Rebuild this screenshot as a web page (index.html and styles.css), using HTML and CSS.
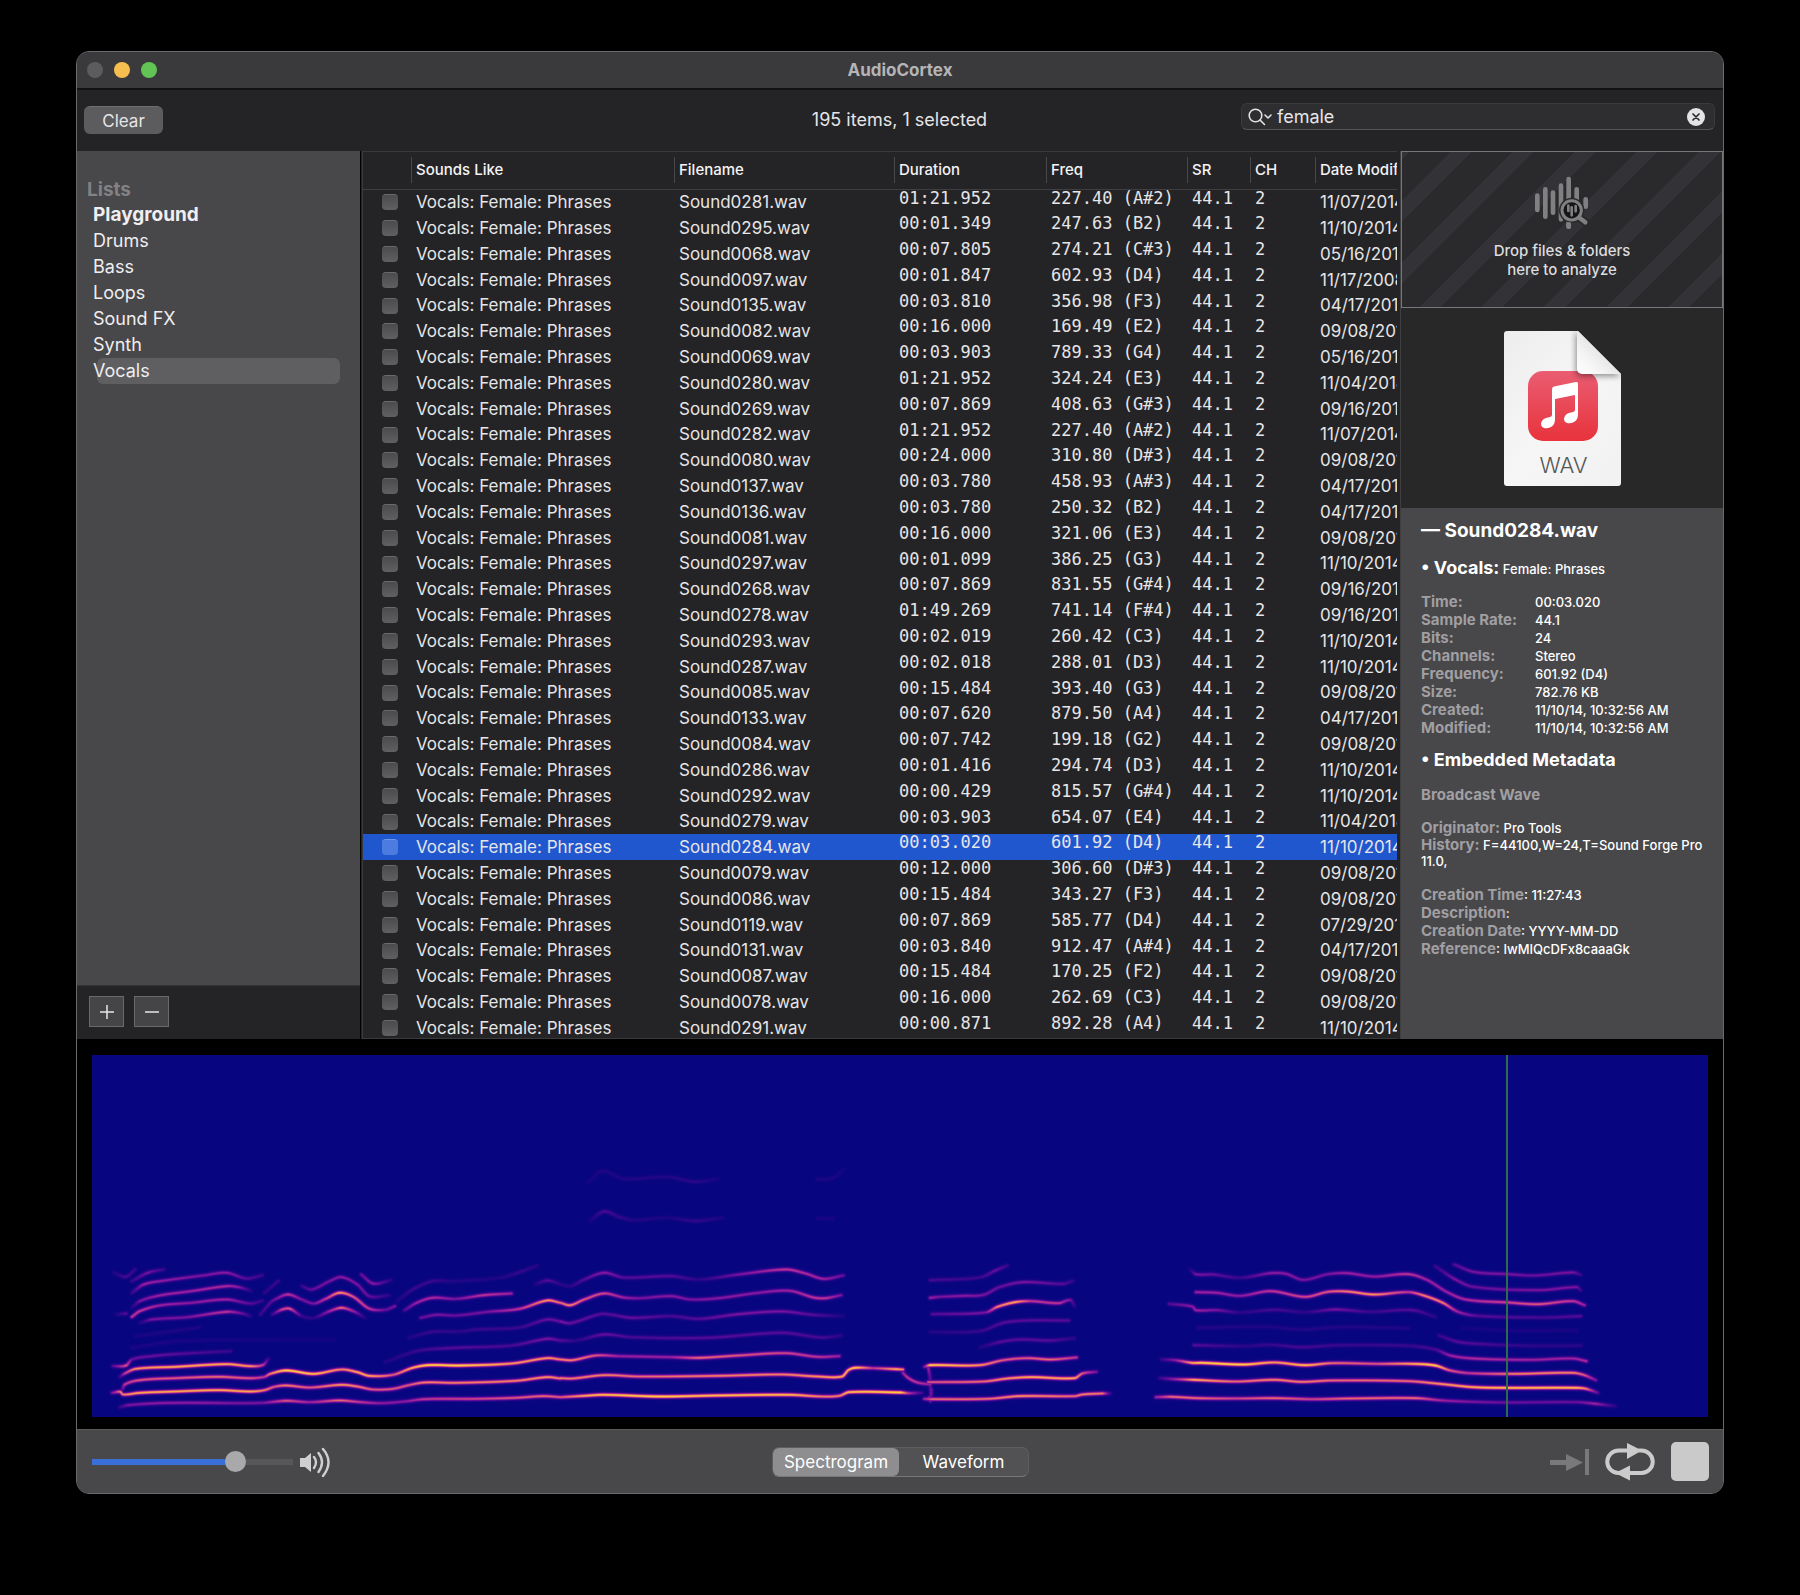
FILE: index.html
```html
<!DOCTYPE html>
<html lang="en">
<head>
<meta charset="utf-8">
<title>AudioCortex</title>
<link rel="stylesheet" href="styles.css">
</head>
<body>
<div class="window">
  <header class="titlebar">
    <div class="lights">
      <button class="light light-close" aria-label="Close"></button>
      <button class="light light-min" aria-label="Minimize"></button>
      <button class="light light-zoom" aria-label="Zoom"></button>
    </div>
    <h1 class="title">AudioCortex</h1>
  </header>

  <div class="toolbar">
    <div><button class="clear">Clear</button></div>
    <p class="status">195 items, 1 selected</p>
    <div class="search">
      <svg class="search-icon" viewBox="0 0 24 18" aria-hidden="true"><g fill="none" stroke="#e2e1e3" stroke-width="1.6" stroke-linecap="round" stroke-linejoin="round"><circle cx="7.500" cy="7.500" r="6.300"/><path d="M12 12l4.500 4.500M17 7l3 3 3-3"/></g></svg>
      <input class="search-input" type="text" value="female" aria-label="Search">
      <button class="search-clear" aria-label="Clear search"><svg viewBox="0 0 18 18"><circle cx="9" cy="9" r="9" fill="#e4e3e5"/><path d="M6 6l6 6M12 6l-6 6" stroke="#2b2a2d" stroke-width="1.700" stroke-linecap="round"/></svg></button>
    </div>
  </div>

  <main class="main">
    <nav class="sidebar">
      <div class="lists">
        <h2 class="lists-title">Lists</h2>
        <ul class="list">
          <li class="item item-bold">Playground</li>
          <li class="item">Drums</li>
          <li class="item">Bass</li>
          <li class="item">Loops</li>
          <li class="item">Sound FX</li>
          <li class="item">Synth</li>
          <li class="item item-active">Vocals</li>
        </ul>
      </div>
      <div class="sidebar-footer">
        <button class="square" aria-label="Add list"><svg viewBox="0 0 16 16"><path d="M8 1v14M1 8h14" stroke="#e6e5e7" stroke-width="1.500"/></svg></button>
        <button class="square" aria-label="Remove list"><svg viewBox="0 0 16 16"><path d="M1 8h14" stroke="#e6e5e7" stroke-width="1.500"/></svg></button>
      </div>
    </nav>

    <section class="files">
      <table class="table">
        <colgroup><col class="c-check"><col class="c-like"><col class="c-name"><col class="c-dur"><col class="c-freq"><col class="c-sr"><col class="c-ch"><col class="c-date"></colgroup>
        <thead><tr>
          <th></th><th>Sounds Like</th><th>Filename</th><th>Duration</th><th>Freq</th><th>SR</th><th>CH</th><th>Date Modified</th>
        </tr></thead>
        <tbody id="rows"></tbody>
      </table>
    </section>

    <aside class="details">
      <div class="drop">
        <svg class="drop-icon" viewBox="940 408 168 162" aria-hidden="true">
          <g stroke="#807f82" stroke-width="14" stroke-linecap="round">
            <path d="M950 467v43M974 448v82M997 458v60M1021 437v101M1044 417v143M1068 448v60M1095 478v22"/>
          </g>
          <circle cx="1053" cy="511" r="38" fill="#2a292c"/>
          <path d="M1070 530l25 17" stroke="#2a292c" stroke-width="24" stroke-linecap="round"/>
          <path d="M1044 553v7" stroke="#807f82" stroke-width="14" stroke-linecap="round"/>
          <circle cx="1053" cy="511" r="29" fill="#151417" stroke="#807f82" stroke-width="9"/>
          <path d="M1043 497v16M1053 502v24M1065 498v16" stroke="#807f82" stroke-width="8" stroke-linecap="round"/>
          <path d="M1076 533l18 14" stroke="#807f82" stroke-width="13" stroke-linecap="round"/>
        </svg>
        <p class="drop-text">Drop files &amp; folders<br>here to analyze</p>
      </div>
      <div class="preview">
        <svg class="doc" viewBox="0 0 117 155" role="img" aria-label="WAV audio file">
          <defs>
            <linearGradient id="page" x1="0" y1="0" x2="1" y2="1"><stop offset="0" stop-color="#ededee"/><stop offset=".5" stop-color="#f6f6f6"/><stop offset="1" stop-color="#f1f1f1"/></linearGradient>
            <linearGradient id="red" x1="0" y1="0" x2="0" y2="1"><stop offset="0" stop-color="#ea5d72"/><stop offset="1" stop-color="#e8333c"/></linearGradient>
            <linearGradient id="fold" x1="0" y1="1" x2=".6" y2=".4"><stop offset="0" stop-color="#ffffff"/><stop offset=".5" stop-color="#f4f4f4"/><stop offset="1" stop-color="#e2e2e3"/></linearGradient>
            <filter id="soft" x="-50%" y="-50%" width="200%" height="200%"><feGaussianBlur stdDeviation="3"/></filter>
            <clipPath id="sheet"><path d="M3 0H74L117 43V152a3 3 0 0 1-3 3H3a3 3 0 0 1-3-3V3a3 3 0 0 1 3-3z"/></clipPath>
          </defs>
          <g clip-path="url(#sheet)">
            <path d="M0 0H117V155H0z" fill="url(#page)"/>
            <rect x="24" y="40" width="70" height="70" rx="15" fill="url(#red)"/>
            <path d="M72 0V40a5 5 0 0 0 5 5H117z" fill="#000" opacity=".45" filter="url(#soft)"/>
            <path d="M73 0V38a5 5 0 0 0 5 5H117V40L77 0z" fill="url(#fold)"/>
          </g>
          <path d="M48 58q0-2 2-2.500l22-4.500q2-.400 2 1.500V83q0 6-4 8-4 2-7 1-3-1-3-4.500 1-4.500 5-5.500l4-1q2-.500 2-2V64l-20 4V88q0 6-4 8-4 2-7 1-3-1-3-4.500 1-4.500 5-5.500l4-1q2-.500 2-2z" fill="#fff"/>
          <text x="59.500" y="142" text-anchor="middle" class="doc-label">WAV</text>
        </svg>
      </div>
      <div class="info">
        <h2 class="file-name">— Sound0284.wav</h2>
        <p class="category"><strong>• Vocals:</strong> Female: Phrases</p>
        <dl class="facts">
          <dt>Time:</dt><dd>00:03.020</dd>
          <dt>Sample Rate:</dt><dd>44.1</dd>
          <dt>Bits:</dt><dd>24</dd>
          <dt>Channels:</dt><dd>Stereo</dd>
          <dt>Frequency:</dt><dd>601.92 (D4)</dd>
          <dt>Size:</dt><dd>782.76 KB</dd>
          <dt>Created:</dt><dd>11/10/14, 10:32:56 AM</dd>
          <dt>Modified:</dt><dd>11/10/14, 10:32:56 AM</dd>
        </dl>
        <h3 class="meta-title">• Embedded Metadata</h3>
        <h4 class="meta-kind">Broadcast Wave</h4>
        <div class="meta-group">
          <p><b>Originator:</b> Pro Tools</p>
          <p class="history"><b>History:</b> F=44100,W=24,T=Sound Forge Pro 11.0,</p>
        </div>
        <div class="meta-group">
          <p><b>Creation Time</b>: 11:27:43</p>
          <p><b>Description</b>:</p>
          <p><b>Creation Date</b>: YYYY-MM-DD</p>
          <p><b>Reference</b>: IwMIQcDFx8caaaGk</p>
        </div>
      </div>
    </aside>
  </main>

  <section class="scope">
    <div class="scope-view">
      <canvas id="spectrogram" class="spectrogram" width="1616" height="362"></canvas>
      <div class="playhead"></div>
    </div>
  </section>

  <footer class="transport">
    <div class="volume">
      <input class="slider" type="range" min="0" max="100" value="74" aria-label="Volume">
      <svg class="speaker" viewBox="0 0 31 30" aria-hidden="true"><path d="M0 11h5l6-5v19l-6-5H0z" fill="#cfced0"/><g fill="none" stroke="#cfced0" stroke-width="2.400" stroke-linecap="round"><path d="M14 10q4 5 0 11M18.500 6q7 9 0 19M23 2q11 13 0 27"/></g></svg>
    </div>
    <div class="segments">
      <button class="segment segment-on">Spectrogram</button>
      <button class="segment">Waveform</button>
    </div>
    <div class="controls">
      <button class="control" aria-label="Skip to end"><svg width="39" height="26" viewBox="0 0 39 26"><path d="M0 11h16V5l17 8.500L16 22v-6H0zM35 0h4v26h-4z" fill="#79787b"/></svg></button>
      <button class="control" aria-label="Loop"><svg width="50" height="38" viewBox="0 0 50 38"><path d="M24 7.500H13.500a11 11 0 0 0 0 22.500h3M24 30H36.500A11 11 0 0 0 36.500 7.500h-3" fill="none" stroke="#cccbcc" stroke-width="4"/><path d="M22 0l15 7.500L22 16zM25 22.500v15L10 30z" fill="#cccbcc"/></svg></button>
      <button class="control stop" aria-label="Stop"></button>
    </div>
  </footer>
</div>
<script src="script.js"></script>
</body>
</html>
```
FILE: styles.css
```css
* { box-sizing: border-box; }
body, h1, h2, h3, h4, p, ul, dl, dd { margin: 0; padding: 0; }
body { background: #000; color: #e6e5e7; font: 17px/26px Inter, "Noto Sans", sans-serif; }
button { border: 0; padding: 0; color: inherit; font: inherit; background: none; }
svg { display: block; }

.window {
  display: flex;
  flex-direction: column;
  height: calc(100vh - 152px);
  margin: 51px 76px 100px;
  border: 1px solid #6a696c;
  border-radius: 13px;
  background: #242326;
  overflow: hidden;
}

.titlebar { display: grid; grid-template-columns: 1fr auto 1fr; align-items: center; height: 38px; background: #3a393c; border-bottom: 2px solid #121114; flex: none; }
.lights { display: flex; gap: 11px; padding-left: 10px; }
.light { width: 16px; height: 16px; border-radius: 50%; }
.light-close { background: #5c5b5e; }
.light-min { background: #f5be4f; }
.light-zoom { background: #61c454; }
.title { font-size: 17px; font-weight: 700; color: #b5b4b6; }

.toolbar { display: grid; grid-template-columns: 1fr auto 1fr; height: 61px; padding: 0 8px 0 7px; flex: none; }
.clear { width: 79px; height: 28px; margin-top: 16px; border-radius: 6px; background: #5c5b5e; border-top: 1px solid #6e6d70; line-height: 26px; }
.status { margin-top: 17px; font-size: 18px; }
.search { display: flex; align-items: center; gap: 5px; justify-self: end; width: 474px; height: 27px; margin-top: 13px; padding: 0 9px 0 6px; border: 1px solid #3b3a3d; border-bottom-color: #555457; border-radius: 6px; background: #2e2d30; }
.search-icon { width: 24px; height: 18px; }
.search-input { flex: 1; min-width: 0; height: 24px; padding: 0; border: 0; outline: 0; background: none; color: inherit; font: inherit; font-size: 18px; }
.search-clear, .search-clear svg { width: 18px; height: 18px; }

.main { display: grid; grid-template-columns: 284px 1fr 323px; flex: 1; min-height: 0; overflow: hidden; }

.sidebar { display: flex; flex-direction: column; border-right: 1px solid #000; min-height: 0; }
.lists { flex: 1; padding: 26px 20px 0 10px; background: #48474a; }
.lists-title { font-size: 19px; line-height: 25px; font-weight: 700; color: #828184; }
.list { padding-left: 10px; list-style: none; }
.item { padding-right: 8px; text-indent: -4px; font-size: 18px; color: #efeef0; border-radius: 6px; }
.item-bold { font-size: 19px; font-weight: 700; }
.item-active { background: #5f5e61; }
.sidebar-footer { display: flex; gap: 10px; padding: 10px 12px; height: 54px; border-top: 1px solid #333235; }
.square { display: grid; place-items: center; width: 35px; height: 31px; border: 1px solid #69686b; background: #454447; }
.square svg { width: 16px; height: 16px; }

.files { margin: 0 3px 0 1px; border-top: 1px solid #3a393c; border-left: 1px solid #3a393c; border-bottom: 1px solid #3a393c; overflow: hidden; min-width: 0; }
.table { width: 1100px; table-layout: fixed; border-collapse: collapse; }
.c-check { width: 48px; }
.c-like { width: 263px; }
.c-name { width: 220px; }
.c-dur { width: 152px; }
.c-freq { width: 141px; }
.c-sr { width: 63px; }
.c-ch { width: 65px; }
.table th { height: 37px; padding: 0 0 0 5px; border-bottom: 1px solid #3f3e41; font-size: 15px; font-weight: 500; text-align: left; color: #f4f3f5; background: linear-gradient(#48474a, #48474a) 0 50% / 1px 26px no-repeat; white-space: nowrap; }
.table th:first-child { background: none; }
.table tr { height: 26px; }
.table tbody tr:nth-child(5n) { height: 25px; }
.table td { padding: 0 0 0 5px; line-height: 25px; white-space: nowrap; }
.table td:first-child { padding-left: 19px; }
.table .mono { font-family: "DejaVu Sans Mono", monospace; line-height: 17px; vertical-align: top; }
.table .selected { background: #2057cf; }
.check { display: block; appearance: none; width: 16px; height: 16px; margin: 0; border-radius: 4px; border-top: 1px solid #6a696c; background: linear-gradient(#4b4a4d, #605f62); }
.selected .check { background: #4c7ce0; border-color: #6e97ec; }

.details { display: flex; flex-direction: column; border-left: 1px solid #3f3e41; min-width: 0; background: #48474a; }
.drop { display: flex; flex-direction: column; align-items: center; height: 157px; padding-top: 24px; border: 1px solid #77767a; background: repeating-linear-gradient(135deg, #333236 0 5px, #2a292c 5px 34px, #333236 34px 44px); flex: none; }
.drop-icon { width: 56px; height: 54px; }
.drop-text { margin-top: 11px; font-size: 15px; line-height: 19px; font-weight: 500; text-align: center; color: #dddcde; }
.preview { display: flex; justify-content: center; height: 200px; padding-top: 23px; background: #282828; flex: none; }
.doc { width: 117px; height: 155px; }
.doc-label { font: 300 22px Inter, sans-serif; fill: #555; }
.info { padding: 10px 18px 0 20px; font-size: 13px; line-height: 18px; font-weight: 500; color: #fff; }
.file-name { font-size: 19px; line-height: 26px; font-weight: 700; }
.category { margin-top: 11px; line-height: 26px; }
.category strong { font-size: 18px; font-weight: 700; }
.facts { display: grid; grid-template-columns: 114px 1fr; margin-top: 11px; }
.facts dt, .meta-kind, .meta-group b { font-size: 15px; font-weight: 700; color: #a09fa2; }
.meta-title { margin-top: 10px; font-size: 18px; line-height: 26px; font-weight: 700; }
.meta-kind { margin-top: 13px; }
.meta-group { margin-top: 15px; }
.meta-group + .meta-group { margin-top: 17px; }
.history { line-height: 16px; }

.scope { padding: 15px 15px 12px; border-top: 1px solid #000; background: #000; flex: none; }
.scope-view { position: relative; }
.spectrogram { display: block; width: 100%; height: 362px; }
.playhead { position: absolute; top: 0; bottom: 0; left: 87.5%; width: 2px; background: #2f6b48; }

.transport { display: grid; grid-template-columns: 1fr auto 1fr; align-items: center; height: 64px; padding: 0 14px 0 15px; border-top: 1px solid #5a595c; background: #48474a; flex: none; }
.volume { display: flex; align-items: center; gap: 7px; }
.slider { appearance: none; width: 201px; height: 22px; margin: 0; background: linear-gradient(90deg, #3a6fd8 71%, #575659 71%) 0 50% / 100% 6px no-repeat; border-radius: 3px; }
.slider::-webkit-slider-thumb { appearance: none; width: 21px; height: 21px; border-radius: 50%; background: #a9a8aa; }
.speaker { width: 31px; height: 30px; }
.segments { display: grid; grid-template-columns: 126px 1fr; width: 257px; height: 30px; border: 1px solid #5e5d60; border-bottom-color: #78777a; border-radius: 7px; background: #525154; }
.segment { border-radius: 6px; line-height: 28px; color: #fff; }
.segment-on { background: #8e8d90; }
.controls { display: flex; align-items: center; justify-content: flex-end; gap: 16px; }
.stop { width: 38px; height: 39px; border-radius: 5px; background: #cbcacb; }
```
FILE: script.js
```js
// Name, duration, frequency, note, date modified
const files = `0281 01:21.952 227.40 A#2 11/07/2014
0295 00:01.349 247.63 B2 11/10/2014
0068 00:07.805 274.21 C#3 05/16/2011
0097 00:01.847 602.93 D4 11/17/2008
0135 00:03.810 356.98 F3 04/17/2012
0082 00:16.000 169.49 E2 09/08/2010
0069 00:03.903 789.33 G4 05/16/2011
0280 01:21.952 324.24 E3 11/04/2014
0269 00:07.869 408.63 G#3 09/16/2013
0282 01:21.952 227.40 A#2 11/07/2014
0080 00:24.000 310.80 D#3 09/08/2010
0137 00:03.780 458.93 A#3 04/17/2012
0136 00:03.780 250.32 B2 04/17/2012
0081 00:16.000 321.06 E3 09/08/2010
0297 00:01.099 386.25 G3 11/10/2014
0268 00:07.869 831.55 G#4 09/16/2013
0278 01:49.269 741.14 F#4 09/16/2013
0293 00:02.019 260.42 C3 11/10/2014
0287 00:02.018 288.01 D3 11/10/2014
0085 00:15.484 393.40 G3 09/08/2010
0133 00:07.620 879.50 A4 04/17/2012
0084 00:07.742 199.18 G2 09/08/2010
0286 00:01.416 294.74 D3 11/10/2014
0292 00:00.429 815.57 G#4 11/10/2014
0279 00:03.903 654.07 E4 11/04/2014
0284 00:03.020 601.92 D4 11/10/2014
0079 00:12.000 306.60 D#3 09/08/2010
0086 00:15.484 343.27 F3 09/08/2010
0119 00:07.869 585.77 D4 07/29/2011
0131 00:03.840 912.47 A#4 04/17/2012
0087 00:15.484 170.25 F2 09/08/2010
0078 00:16.000 262.69 C3 09/08/2010
0291 00:00.871 892.28 A4 11/10/2014`.split("\n").map(line => line.split(" "));

document.getElementById("rows").innerHTML = files.map(([id, time, freq, note, date]) => `
  <tr${id === "0284" ? ' class="selected"' : ""}>
    <td><input type="checkbox" class="check" aria-label="Mark Sound${id}.wav"></td>
    <td>Vocals: Female: Phrases</td>
    <td>Sound${id}.wav</td>
    <td class="mono">${time}</td>
    <td class="mono">${freq} (${note})</td>
    <td class="mono">44.1</td>
    <td class="mono">2</td>
    <td>${date}</td>
  </tr>`).join("");

// Partials of each sung phrase: x, y, level triples in the phrase's own grid.
const phrases = [
  { x: -12, y: 184, sx: 2.529, sy: 3, partials: [
    [100,503,.2,120,497,.4,200,491,.45,300,490,.45,400,491,.4,460,490,.4,520,484,.7,580,488,.5,655,483,.75,710,488,.6,760,491,.45,820,486,.45,870,479,.6,1000,478,.65,1100,475,.7,1170,470,.75,1214,473,.7],
    [80,460,.4,100,457,.8,108,465,.8,150,460,.9,240,456,.9,350,452,.9,430,456,.9,465,452,.8,490,442,.7,520,438,.8,580,444,.7,660,436,.85,700,441,.8,740,450,.7,790,448,.7,830,437,.7,870,429,.8,950,430,.8,1100,424,.8,1180,413,.85,1214,417,.8],
    [105,452,.3,112,435,.6,150,422,.7,240,416,.7,350,412,.75,430,416,.7,465,412,.6,480,403,.8,520,393,1,590,403,.95,660,390,.8,700,398,.9,730,409,.9,790,406,.7,840,385,.9,880,377,1,960,378,1,1090,372,.85,1180,356,.85,1214,360,.8],
    [100,412,.2,112,402,.6,140,388,.85,240,382,.9,370,374,.9,430,380,.85,462,376,.6,475,358,.2],
    [82,380,.3,115,378,.7,130,360,.35,180,350,.35,250,343,.3,380,335,.2],
    [150,250,.1,180,240,.4,270,233,.4,370,217,.6,410,222,.35,430,230,.15],
    [90,225,.1,115,222,.3],
    [130,232,.6,150,215,.6,200,198,.5,280,190,.45,370,180,.5,430,192,.3,460,184,.2],
    [130,205,.1,150,185,.4,200,168,.5,280,155,.5,370,140,.55,400,143,.45,430,153,.15],
    [130,160,.2,160,135,.5,220,122,.45,310,108,.4,370,100,.45,420,117,.3,460,107,.2],
    [130,125,.2,170,100,.4,210,90,.2],
    [85,100,.12,115,112,.25,138,90,.18],
    [455,225,.2,480,190,.3,495,178,.4,525,165,.6,560,180,.4,590,192,.4,620,178,.6,655,160,.85,690,172,.7,730,207,.6,770,211,.35,795,200,.4],
    [485,225,.2,510,210,.65,530,208,.7,560,230,.2,590,235,.15,630,215,.5,660,205,.75,690,215,.5,720,235,.1],
    [560,140,.2,585,150,.35,630,125,.4,660,113,.45,700,135,.4,730,170,.35,780,168,.15],
    [710,105,.35,740,132,.45,785,122,.15],
    [465,160,.15,500,125,.2],
    [820,212,.3,850,190,.5,890,175,.55,950,178,.4,1020,167,.6,1090,162,.5],
    [800,185,.1,840,150,.2,890,125,.2,940,125,.12,1060,115,.1,1110,98,.2,1155,78,.12],
    [860,235,.35,900,226,.4,950,228,.35,1030,217,.4,1110,208,.6,1180,183,.85,1214,190,.75],
    [1150,135,.1,1180,123,.3,1214,134,.15],
    [830,295,.1,890,277,.2,960,276,.15,1000,270,.2,1110,264,.2,1180,240,.35,1214,246,.35],
    [770,368,.1,850,335,.2,930,326,.3,1090,318,.25,1180,298,.4,1214,303,.3],
    [140,290,.08,300,264,.1],
    [130,325,.08,250,305,.08,640,300,.05]
  ] },
  { x: 468, y: 84, sx: 2.529, sy: 3, partials: [
    [0,773,.7,60,769,.9,110,766,.95,250,771,1,400,768,.95,580,766,.95,660,771,.8,705,769,.8,730,758,.95,860,759,1,880,761,.6,915,760,.2],
    [0,716,.8,30,717,.8,110,707,.8,200,711,.75,400,709,.8,560,705,.8,650,711,.85,712,711,.9,728,692,.9,745,685,1,790,686,.6,850,689,.9,866,690,.8],
    [866,700,.5,878,714,.6,900,728,.6,935,735,.5],
    [0,660,.8,30,662,.8,90,648,.7,150,650,.5,280,653,.5,350,655,.75,450,648,.7,570,641,.65,650,652,.6,705,650,.5],
    [0,490,.75,25,497,.8,60,480,.7,110,462,.65,160,474,.5,200,476,.4,280,470,.45,330,480,.4,400,476,.45,500,460,.45,580,454,.5,640,474,.6,670,476,.6,710,467,.4],
    [0,434,.15,25,440,.15,60,420,.3,110,400,.45,160,414,.3,280,410,.3,350,420,.15,450,405,.4,570,390,.6,620,402,.55,665,418,.5,715,408,.35],
    [0,546,.4,25,551,.35,100,524,.3,130,526,.3,180,535,.35,280,530,.25,350,538,.3,450,524,.4,560,516,.4,640,526,.3,715,530,.1],
    [0,603,.3,40,603,.15,110,585,.35,180,593,.25,370,595,.3,560,580,.3,660,594,.25,710,588,.15],
    [70,128,.06,105,95,.1,160,118,.1,270,112,.12,340,127,.15,400,118,.05],
    [650,120,.1,690,115,.09,715,90,.05],
    [75,243,.08,110,216,.26,150,233,.18,185,242,.12,270,235,.08,340,244,.18,410,235,.08],
    [650,237,.08,690,237,.07],
    [920,682,.4,935,677,1,1060,677,.85,1120,662,.7,1180,656,.7,1240,660,.75,1305,654,.6],
    [930,728,.7,1070,726,.75,1130,717,.85,1190,713,.9,1300,716,.9,1320,702,.7,1355,697,.4],
    [920,778,.5,940,779,.75,1080,778,.75,1160,770,.85,1300,770,.75,1320,765,.8,1370,762,.8,1390,762,.2],
    [930,685,.5,934,710,.35,938,750,.4,932,775,.5],
    [935,578,.12,1060,575,.2,1120,550,.3,1180,543,.3,1285,543,.3],
    [940,524,.3,1075,519,.4,1105,502,.8,1150,488,.9,1190,485,.6,1260,491,.6,1290,482,.4,1300,500,.15],
    [935,475,.5,960,472,.4,1020,469,.45,1070,466,.4,1110,443,.35,1170,428,.4,1270,433,.3,1295,425,.2],
    [935,422,.25,1060,414,.2,1100,393,.35,1130,378,.2],
    [1060,624,.1,1110,608,.3,1160,600,.3,1240,603,.3,1300,596,.15]
  ] },
  { x: 1048, y: 184, sx: 2.613, sy: 3, partials: [
    [40,473,.5,80,472,.75,150,476,.75,250,477,.65,350,476,.75,450,479,.65,550,477,.75,720,476,.75,790,483,.5,870,487,.4,960,489,.35,1140,488,.35,1190,493,.5,1240,500,.15],
    [50,416,.2,90,419,.5,140,421,.9,250,426,.75,350,421,.8,420,427,.8,500,423,.75,700,425,.75,790,434,.85,870,443,.9,960,445,.95,1140,445,.95,1165,448,.8,1195,460,.3],
    [55,360,.2,90,362,.45,135,370,.9,160,370,1,270,375,1,350,369,.85,430,377,.95,500,371,.75,620,373,.7,710,373,.9,770,378,1,810,393,.7,860,401,.6,980,403,.8,1130,400,.8,1160,407,.7,1190,422,.4],
    [140,317,.3,270,320,.15,340,316,.2,420,323,.25,520,317,.2,700,319,.2,770,330,.25,810,348,.5,870,357,.55,1020,361,.5,1130,357,.5,1165,365,.55],
    [780,288,.2,830,307,.3,900,314,.25,1030,319,.15,1150,318,.15],
    [150,265,.12,330,262,.1,420,270,.12,520,263,.12,700,266,.1],
    [840,266,.05,960,273,.08,1140,273,.08],
    [75,193,.3,135,201,.45,145,212,.5,200,212,.4,260,219,.15,350,211,.25,430,218,.15,510,210,.4,600,217,.2,710,212,.3,770,232,.15],
    [145,158,.5,200,160,.5,260,169,.45,340,155,.6,430,172,.65,490,157,.7,540,156,.8,610,165,.85,700,158,.6,740,168,.8,790,190,.8,830,217,.5,880,229,.3,1050,234,.25,1150,230,.3],
    [130,90,.1,145,104,.4,190,105,.35,260,115,.2,340,101,.45,380,103,.45,425,121,.4,490,104,.4,540,101,.5,610,111,.45,700,104,.6,750,122,.5,800,157,.5,850,180,.55,960,189,.65,1040,194,.7,1130,185,.6,1160,197,.5],
    [770,80,.2,820,118,.4,870,142,.35,1040,152,.4,1140,143,.4,1150,152,.2],
    [820,75,.3,870,97,.4,960,104,.4,1030,108,.35,1130,99,.4,1150,106,.2]
  ] }
];

const ramp = [[0,8,5,128],[.15,42,6,138],[.3,84,10,152],[.45,136,24,158],[.6,184,52,140],[.75,226,108,106],[.88,244,158,82],[1,250,204,70]];
function colour(v) {
  let k = 1;
  while (k < ramp.length - 1 && v > ramp[k][0]) k++;
  const a = ramp[k - 1], b = ramp[k], t = Math.min(1, (v - a[0]) / (b[0] - a[0]));
  return [1, 2, 3].map(c => a[c] + (b[c] - a[c]) * t);
}

const canvas = document.getElementById("spectrogram");
const W = canvas.width, H = canvas.height;
const level = new Float32Array(W * H);

// Leaves a soft dot of energy round one time/frequency point.
function deposit(cx, cy, v) {
  for (let y = Math.max(0, Math.floor(cy) - 6); y <= Math.min(H - 1, cy + 6); y++)
    for (let x = Math.max(0, Math.floor(cx) - 4); x <= Math.min(W - 1, cx + 4); x++) {
      const dx = x - cx, dy = y - cy;
      const e = v * Math.exp(-(dx * dx + dy * dy) / 4.2);
      if (e > level[y * W + x]) level[y * W + x] = e;
    }
}

const spline = (a, b, c, d, t) =>
  .5 * (2 * b + (c - a) * t + (2 * a - 5 * b + 4 * c - d) * t * t + (3 * b - a - 3 * c + d) * t * t * t);

for (const p of phrases)
  for (const flat of p.partials) {
    const pts = [];
    for (let i = 0; i < flat.length; i += 3)
      pts.push([p.x + flat[i] / p.sx, p.y + flat[i + 1] / p.sy, flat[i + 2]]);
    for (let i = 0; i < pts.length - 1; i++) {
      const b = pts[i], c = pts[i + 1], a = pts[i - 1] || b, d = pts[i + 2] || c;
      const n = Math.ceil(2 * Math.hypot(c[0] - b[0], c[1] - b[1]));
      const span = c[0] - b[0];
      const slope = (m, q) => q[0] === m[0] ? 0 : (q[1] - m[1]) / (q[0] - m[0]) * span;
      for (let s = 0; s <= n; s++) {
        const t = s / n;
        const y = spline(c[1] - 2 * slope(a, c), b[1], c[1], b[1] + 2 * slope(b, d), t);
        deposit(b[0] + span * t, y, b[2] + (c[2] - b[2]) * t);
      }
    }
  }

const ctx = canvas.getContext("2d");
const image = ctx.createImageData(W, H);
for (let i = 0; i < level.length; i++) {
  const [r, g, b] = colour(level[i]);
  image.data.set([r, g, b, 255], i * 4);
}
ctx.putImageData(image, 0, 0);
```
